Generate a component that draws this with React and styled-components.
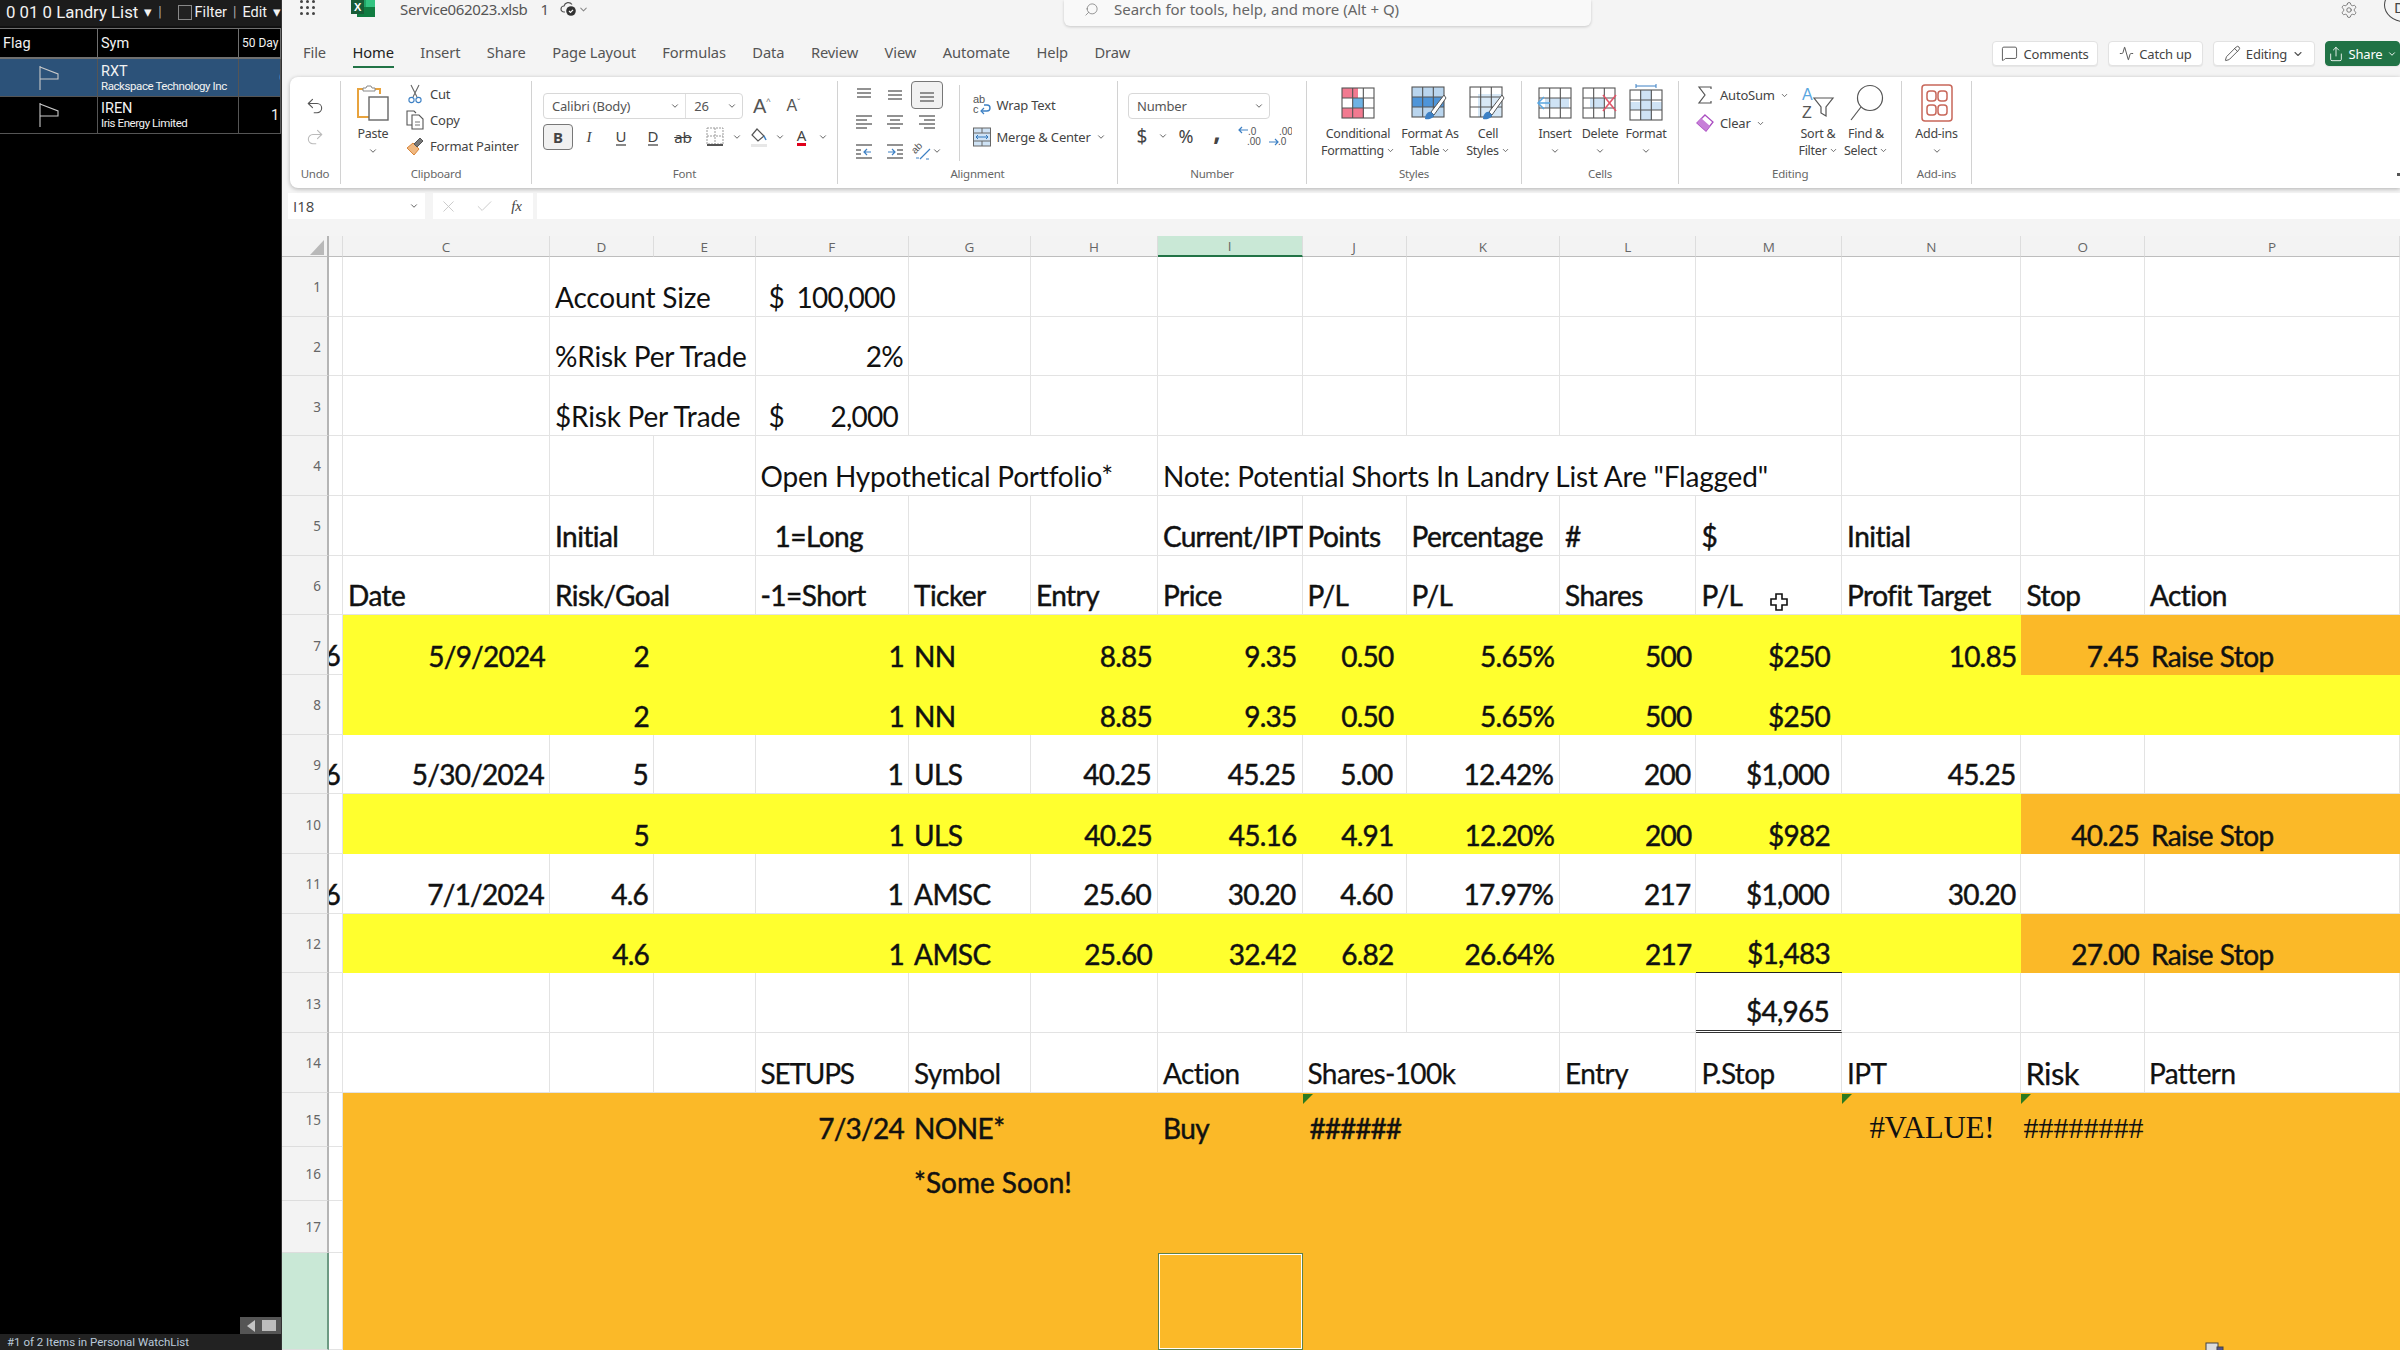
import React from 'react';
import styled, { createGlobalStyle } from 'styled-components';
import {
	Undo2,
	Redo2,
	ChevronDown,
	X,
	Check,
	Search,
	Settings,
	MessageSquare,
	Activity,
	Pencil,
	Share,
} from 'lucide-react';

const GlobalStyle = createGlobalStyle`
	html, body {
		margin: 0;
		padding: 0;
		background: #000;
		overflow: hidden;
	}
	* {
		box-sizing: border-box;
	}
`;

const UI_FONT = `"Noto Sans", "Open Sans", sans-serif`;
const PLAIN_FONT = `"Open Sans", "Noto Sans", sans-serif`;

const Page = styled.div`
	position: relative;
	display: flex;
	width: 2400px;
	height: 1350px;
	overflow: hidden;
	font-family: ${UI_FONT};
`;

/* ---------- watchlist panel ---------- */

const Sidebar = styled.aside`
	width: 282px;
	flex: none;
	display: flex;
	flex-direction: column;
	background: #000;
	color: #f2f2f2;
	font-family: Roboto, sans-serif;
	border-right: 1px solid #333;
`;

const ListBar = styled.div`
	height: 28px;
	flex: none;
	display: flex;
	align-items: center;
	gap: 6px;
	padding: 0 0 2px 6px;
	background: #1c1c1c;
	border-bottom: 2px solid #111;
	font-size: 16.8px;
	white-space: nowrap;
	overflow: hidden;
`;

const FilterBox = styled.span`
	width: 15px;
	height: 15px;
	margin-left: 10px;
	margin-right: -3px;
	border: 1px solid #888;
	background: #222;
`;

const SmallCaps = styled.span`
	font-size: 14.5px;
`;

const Pipe = styled.span`
	color: #aaa;
	font-size: 14px;
`;

const WatchGrid = styled.div`
	display: grid;
	grid-template-columns: 98px 141px 1fr;
	grid-template-rows: 30px 38px 37px;
	border-top: 1px solid #707070;
`;

const HeadCell = styled.div`
	display: flex;
	align-items: center;
	padding-left: ${(p) => p.$pad || 3}px;
	font-size: ${(p) => p.$size || 14.5}px;
	border-right: 1px solid #707070;
	border-bottom: 2px solid #707070;
	overflow: hidden;
	white-space: nowrap;
`;

const WatchCell = styled.div`
	display: flex;
	flex-direction: ${(p) => (p.$stack ? 'column' : 'row')};
	justify-content: ${(p) => (p.$stack ? 'center' : 'flex-start')};
	align-items: ${(p) => (p.$stack ? 'flex-start' : 'center')};
	padding-left: ${(p) => p.$pad || 3}px;
	background: ${(p) => (p.$active ? '#2c5279' : '#000')};
	border-right: 1px solid #555;
	border-bottom: 1px solid #555;
	overflow: hidden;
	white-space: nowrap;
`;

const Ticker = styled.span`
	font-size: 14.5px;
	line-height: 17px;
`;

const Company = styled.span`
	font-size: 11.5px;
	line-height: 13px;
	letter-spacing: -0.42px;
`;

const WatchValue = styled.span`
	font-size: 14.5px;
`;

const SidebarGap = styled.div`
	flex: 1;
	display: flex;
	justify-content: flex-end;
	align-items: flex-end;
`;

const ScrollBit = styled.div`
	width: 41px;
	height: 17px;
	display: flex;
	align-items: center;
	gap: 7px;
	padding-left: 7px;
	background: #555;
`;

const ScrollArrow = styled.span`
	width: 0;
	height: 0;
	border-top: 6px solid transparent;
	border-bottom: 6px solid transparent;
	border-right: 8px solid #c4c4c4;
`;

const ScrollThumb = styled.span`
	width: 14px;
	height: 11px;
	background: #bdbdbd;
`;

const StatusBar = styled.div`
	height: 16px;
	flex: none;
	display: flex;
	align-items: center;
	padding-left: 7px;
	background: #222;
	color: #b9c9da;
	font-size: 11.5px;
`;

/* ---------- excel top ---------- */

const Workbook = styled.main`
	flex: 1;
	min-width: 0;
	display: flex;
	flex-direction: column;
	background: #f4f4f4;
	color: #444;
`;

const TitleBar = styled.header`
	height: 36px;
	flex: none;
	display: flex;
	align-items: flex-start;
`;

const TitleLeft = styled.div`
	width: 782px;
	height: 18px;
	flex: none;
	display: flex;
	align-items: center;
	padding-left: 18px;
	font-size: 15px;
	color: #555;
`;

const Waffle = styled.div`
	width: 16px;
	display: grid;
	grid-template-columns: repeat(3, 3px);
	gap: 3px;
	margin-top: -3px;
	margin-right: 35px;
`;

const WaffleDot = styled.span`
	width: 3px;
	height: 3px;
	border-radius: 50%;
	background: #444;
`;

const FileName = styled.span`
	margin-left: 25px;
	letter-spacing: -0.35px;
`;

const FileNumber = styled.span`
	margin: 0 11px 0 13px;
`;

const SearchBox = styled.div`
	width: 527px;
	height: 26px;
	flex: none;
	display: flex;
	align-items: center;
	gap: 15px;
	padding: 0 0 8px 20px;
	background: #f9f9f9;
	border-radius: 0 0 6px 6px;
	box-shadow: 0 1px 3px rgba(0, 0, 0, 0.18);
	font-size: 15px;
	color: #666;
`;

const TitleRight = styled.div`
	flex: 1;
	height: 20px;
	display: flex;
	align-items: center;
	justify-content: flex-end;
	gap: 26px;
`;

const Avatar = styled.span`
	width: 40px;
	height: 34px;
	flex: none;
	margin-right: -24px;
	margin-top: -10px;
	border: 1px solid #444;
	border-radius: 50%;
	padding: 8px 0 0 9px;
	font-size: 15px;
`;

const TabBar = styled.nav`
	height: 41px;
	flex: none;
	display: flex;
	align-items: flex-start;
	padding-left: 21px;
`;

const Tab = styled.span`
	margin-right: 26.5px;
	padding-top: 5px;
	height: 32px;
	line-height: 22px;
	font-size: 14.7px;
	letter-spacing: -0.12px;
	color: ${(p) => (p.$active ? '#222' : '#555')};
	border-bottom: ${(p) => (p.$active ? '2px solid #217346' : '2px solid transparent')};
`;

const TopButtons = styled.div`
	margin-left: auto;
	display: flex;
	gap: 10px;
	padding-top: 5px;
`;

const TopButton = styled.span`
	height: 25px;
	width: ${(p) => p.$width}px;
	display: flex;
	align-items: center;
	justify-content: center;
	gap: 5px;
	font-size: 13px;
	letter-spacing: -0.2px;
	border-radius: 4px;
	color: ${(p) => (p.$primary ? '#fff' : '#444')};
	background: ${(p) => (p.$primary ? '#217346' : '#fff')};
	border: 1px solid ${(p) => (p.$primary ? '#217346' : '#e2e2e2')};
	box-shadow: 0 1px 1px rgba(0, 0, 0, 0.06);
`;

/* ---------- ribbon ---------- */

const Ribbon = styled.section`
	height: 111px;
	flex: none;
	display: flex;
	margin-left: 8px;
	background: #fff;
	border-radius: 8px 0 0 8px;
	box-shadow: 0 1px 4px rgba(0, 0, 0, 0.28);
	padding: 4px 0;
	position: relative;
`;

const Group = styled.div`
	width: ${(p) => p.$width}px;
	flex: none;
	display: flex;
	flex-direction: column;
	border-right: 1px solid #d2d2d2;
`;

const GroupBody = styled.div`
	flex: 1;
	display: flex;
	align-items: flex-start;
	padding-left: ${(p) => p.$left || 0}px;
	padding-top: ${(p) => p.$top || 0}px;
	min-height: 0;
`;

const GroupLabel = styled.div`
	height: 19px;
	flex: none;
	text-align: ${(p) => p.$align || 'center'};
	padding-left: ${(p) => p.$left || 0}px;
	font-size: 11.5px;
	letter-spacing: -0.2px;
	line-height: 18px;
	color: #666;
`;

const Col = styled.div`
	display: flex;
	flex-direction: column;
	align-items: ${(p) => p.$align || 'flex-start'};
	width: ${(p) => (p.$width ? `${p.$width}px` : 'auto')};
	margin-top: ${(p) => p.$top || 0}px;
	gap: ${(p) => p.$gap || 0}px;
`;

const Row = styled.div`
	display: flex;
	align-items: center;
	gap: ${(p) => p.$gap || 0}px;
	margin-top: ${(p) => p.$top || 0}px;
`;

const UndoIcon = styled.span`
	height: 31px;
	width: 100%;
	display: flex;
	align-items: center;
	justify-content: center;
	color: ${(p) => (p.$off ? '#bbb' : '#555')};
`;

const SmallTool = styled.div`
	height: ${(p) => p.$height || 26}px;
	display: flex;
	align-items: center;
	gap: 5px;
	font-size: 13px;
	letter-spacing: -0.2px;
	color: #444;
	white-space: nowrap;
`;

const IconSlot = styled.span`
	width: ${(p) => p.$size || 20}px;
	display: flex;
	justify-content: center;
	flex: none;
`;

const BigTool = styled.div`
	width: ${(p) => p.$width}px;
	flex: none;
	display: flex;
	flex-direction: column;
	align-items: center;
	font-size: 12.5px;
	letter-spacing: -0.25px;
	line-height: 17px;
	color: #444;
	white-space: nowrap;
`;

const BigIcon = styled.div`
	height: 44px;
	display: flex;
	align-items: center;
	justify-content: center;
`;

const BigText = styled.div`
	display: flex;
	align-items: center;
	justify-content: center;
	gap: 2px;
	height: 17px;
`;

const SelectBox = styled.div`
	display: flex;
	align-items: center;
	width: ${(p) => p.$width}px;
	height: 26px;
	background: #fff;
	border: 1px solid #d8d8d8;
	border-radius: 4px;
	font-size: 13px;
	letter-spacing: -0.2px;
	color: #555;
`;

const SelectPart = styled.div`
	display: flex;
	align-items: center;
	justify-content: space-between;
	width: ${(p) => p.$width}px;
	height: 100%;
	padding: 0 5px 0 8px;
	border-right: ${(p) => (p.$split ? '1px solid #e0e0e0' : 'none')};
`;

const FontSizeGlyph = styled.span`
	font-size: ${(p) => p.$size}px;
	line-height: 1;
	color: #555;
	margin-left: ${(p) => p.$left || 0}px;
	font-family: "Liberation Sans", sans-serif;
`;

const TinyMark = styled.span`
	font-size: 9px;
	vertical-align: super;
	color: #777;
`;

const FormatButton = styled.span`
	width: ${(p) => p.$width || 32}px;
	height: 26px;
	display: flex;
	align-items: center;
	justify-content: center;
	font-size: 15px;
	color: #444;
	font-weight: ${(p) => (p.$bold ? 700 : 400)};
	font-style: ${(p) => (p.$italic ? 'italic' : 'normal')};
	font-family: ${(p) => (p.$italic ? '"Liberation Serif", serif' : UI_FONT)};
	background: ${(p) => (p.$on ? '#f1f1f1' : 'transparent')};
	border: ${(p) => (p.$on ? '1px solid #777' : 'none')};
	border-radius: 4px;
`;

const UnderlineGlyph = styled.span`
	line-height: 15px;
	border-bottom: ${(p) => (p.$heavy ? '3px' : '2px')} solid ${(p) => p.$color || '#888'};
`;

const StrikeGlyph = styled.span`
	text-decoration: line-through;
`;

const AlignGrid = styled.div`
	display: grid;
	grid-template-columns: repeat(3, 31.5px);
	grid-auto-rows: 28px;
`;

const AlignCell = styled.span`
	display: flex;
	align-items: center;
	justify-content: center;
	background: ${(p) => (p.$on ? '#f1f1f1' : 'transparent')};
	border: ${(p) => (p.$on ? '1px solid #777' : 'none')};
	border-radius: 4px;
`;

const InnerRule = styled.div`
	width: 1px;
	height: 76px;
	background: #d2d2d2;
	margin: 4px 12px 0 16px;
`;

const NumberGlyph = styled.span`
	font-size: ${(p) => p.$size || 18}px;
	font-weight: ${(p) => p.$weight || 400};
	color: #444;
	line-height: 1;
	margin-top: ${(p) => (p.$lift ? `-${p.$lift}px` : 0)};
`;

const RibbonEnd = styled.span`
	position: absolute;
	right: 0;
	bottom: 12px;
	width: 3px;
	height: 3px;
	background: #555;
`;

/* ---------- formula bar ---------- */

const FormulaBar = styled.div`
	height: 26px;
	flex: none;
	display: flex;
	gap: 8px;
	margin: 5px 0 17px 6px;
`;

const NameBox = styled.div`
	width: 137px;
	display: flex;
	align-items: center;
	justify-content: space-between;
	padding: 0 6px 0 5px;
	background: #fff;
	font-family: ${PLAIN_FONT};
	font-size: 15px;
	color: #444;
`;

const FxBox = styled.div`
	width: 100px;
	display: flex;
	align-items: center;
	justify-content: space-between;
	padding: 0 11px 0 6px;
	background: #fff;
	margin-right: -4px;
	color: #c4c4c4;
`;

const FxText = styled.span`
	font-family: "Liberation Serif", serif;
	font-style: italic;
	font-size: 15px;
	color: #444;
`;

const FormulaInput = styled.div`
	flex: 1;
	background: #fff;
`;

/* ---------- sheet ---------- */

const Sheet = styled.div`
	flex: 1;
	min-height: 0;
	display: grid;
	grid-template-columns: 47px 14px 207px 104px 101.5px 153.5px 122px 127px 144.5px 104px 153.6px 136.4px 145.6px 179.4px 123.5px 1fr;
	grid-template-rows: 21px repeat(14, 59.71px) 54px 54px 52px 1fr;
	background: #fff;
	font-family: Lato, sans-serif;
	color: #111;
`;

const Corner = styled.div`
	display: flex;
	align-items: flex-end;
	justify-content: flex-end;
	padding: 0 3px 1px 0;
	background: #f3f3f3;
	border-right: 2px solid #b5b5b5;
	border-bottom: 1px solid #bdbdbd;
`;

const ColHead = styled.div`
	display: flex;
	align-items: center;
	justify-content: center;
	padding-top: 1px;
	font-family: ${PLAIN_FONT};
	font-size: 13.5px;
	color: #666;
	background: ${(p) => (p.$on ? '#c9e8d6' : '#f3f3f3')};
	border-right: 1px solid #ddd;
	border-bottom: ${(p) => (p.$on ? '2px solid #217346' : '1px solid #bdbdbd')};
`;

const RowHead = styled.div`
	display: flex;
	align-items: center;
	justify-content: flex-end;
	padding: 2px 6px 0 0;
	font-family: ${UI_FONT};
	font-size: 13.5px;
	color: #666;
	background: ${(p) => (p.$on ? '#c9e8d6' : '#f3f3f3')};
	border-right: 2px solid ${(p) => (p.$on ? '#6d9a83' : '#b5b5b5')};
	border-bottom: 1px solid #ddd;
`;

const fills = {
	yellow: '#ffff2e',
	orange: '#fbb928',
};

const Cell = styled.div`
	position: relative;
	grid-column: span ${(p) => p.$span || 1};
	display: flex;
	align-items: flex-end;
	justify-content: ${(p) => (p.$align === 'right' ? 'flex-end' : p.$align === 'center' ? 'center' : 'flex-start')};
	padding: 0 ${(p) => p.$padRight ?? 5}px 2px ${(p) => p.$padLeft ?? 5}px;
	font-size: ${(p) => p.$size || 28}px;
	line-height: 34px;
	letter-spacing: ${(p) => p.$tight ?? -0.75}px;
	white-space: nowrap;
	font-family: ${(p) => (p.$serif ? '"Liberation Serif", serif' : 'inherit')};
	-webkit-text-stroke: ${(p) => p.$stroke || 0}px;
	background: ${(p) => (p.$fill ? fills[p.$fill] : '#fff')};
	border-right: ${(p) => (p.$fill ? 'none' : '1px solid #e3e3e3')};
	border-bottom: ${(p) => {
		if (p.$under === 'double') return '3px double #333';
		if (p.$under === 'single') return '1px solid #222';
		return p.$fill ? 'none' : '1px solid #e3e3e3';
	}};
	box-shadow: ${(p) => (p.$selected ? 'inset 0 0 0 1px #5d8049, inset 0 0 0 2px #fff' : 'none')};

	&::before {
		content: '';
		display: ${(p) => (p.$flag ? 'block' : 'none')};
		position: absolute;
		top: 1px;
		left: 0;
		border-top: 10px solid #2c7a1f;
		border-right: 10px solid transparent;
	}
`;

const NarrowCell = styled(Cell)`
	overflow: hidden;
	justify-content: flex-end;
	padding-right: 2px;
	padding-left: 0;
`;

const AccountValue = styled.span`
	flex: 1;
	display: flex;
	justify-content: space-between;
`;

const Cursor = styled.svg`
	position: absolute;
	left: 1769px;
	top: 592px;
`;

const DragIcon = styled.svg`
	position: absolute;
	left: 2205px;
	top: 1342px;
`;

/* ---------- icons ---------- */

const Caret = ({ size = 10, color = '#555' }) => (
	<ChevronDown size={size} strokeWidth={2.2} color={color} />
);

const Flag = () => (
	<svg width="22" height="26" viewBox="0 0 22 26" fill="none" stroke="#c9c9c9" strokeWidth="1.1">
		<path d="M2 1v24" />
		<path d="M2 2l18 7v5H2" />
	</svg>
);

const ExcelIcon = () => (
	<svg width="24" height="18" viewBox="0 0 24 18">
		<rect x="6" y="-3" width="18" height="20" rx="1" fill="#21a366" />
		<rect x="15" y="-3" width="9" height="10" fill="#33c481" />
		<rect x="6" y="7" width="18" height="10" fill="#107c41" />
		<rect x="0" y="-2" width="13" height="16" fill="#185c37" />
		<text x="3" y="11" fontSize="11" fontWeight="700" fill="#fff" fontFamily="Liberation Sans">X</text>
	</svg>
);

const CloudSync = () => (
	<svg width="18" height="16" viewBox="0 0 18 16" fill="none" stroke="#555" strokeWidth="1.2">
		<path d="M5 11H4a3 3 0 0 1 0-6 4.5 4.5 0 0 1 8-1.5" />
		<circle cx="11" cy="10" r="4.8" fill="#333" stroke="none" />
		<path d="M9 10l1.5 1.5L13 8.8" stroke="#fff" />
	</svg>
);

const PasteIcon = () => (
	<svg width="32" height="36" viewBox="0 0 32 36" fill="none">
		<path d="M6 4H1v28h11" stroke="#e8a33d" strokeWidth="2" />
		<path d="M18 4h5v5" stroke="#e8a33d" strokeWidth="2" />
		<path d="M6 6V3h3l1-2h4l1 2h3v3z" fill="#fff" stroke="#888" />
		<rect x="12" y="12" width="19" height="23" fill="#fff" stroke="#666" strokeWidth="1.4" />
	</svg>
);

const CutIcon = () => (
	<svg width="14" height="20" viewBox="0 0 14 20" fill="none" stroke="#666" strokeWidth="1.1">
		<path d="M3 1l6 12M11 1L5 13" />
		<circle cx="3.5" cy="16" r="2.6" stroke="#3d80c4" />
		<circle cx="10.5" cy="16" r="2.6" stroke="#3d80c4" />
	</svg>
);

const CopyIcon = () => (
	<svg width="18" height="20" viewBox="0 0 18 20" fill="none" stroke="#555" strokeWidth="1.1">
		<path d="M8 15H1V1h7l2 2" />
		<path d="M6 5h7l4 4v10H6z" fill="#fff" />
		<path d="M9 12h5M9 15h5" stroke="#777" />
	</svg>
);

const PainterIcon = () => (
	<svg width="18" height="20" viewBox="0 0 18 20" fill="none">
		<path d="M1 12l6-5 6 6-5 6z" fill="#f0b880" stroke="#d8853a" />
		<path d="M8 8l6-6 3 3-6 6z" fill="#777" stroke="#555" />
	</svg>
);

const Lines = ({ rows, children, color = '#777' }) => (
	<svg width="20" height="18" viewBox="0 0 20 18" fill="none" stroke={color} strokeWidth="1.6">
		{rows.map(([x1, x2, y]) => (
			<path key={`${x1}-${y}`} d={`M${x1} ${y}H${x2}`} />
		))}
		{children}
	</svg>
);

const BorderIcon = () => (
	<svg width="20" height="20" viewBox="0 0 20 20" fill="none" stroke="#999" strokeWidth="1" strokeDasharray="2 1">
		<rect x="2" y="1" width="16" height="16" />
		<path d="M10 1v16M2 9h16" />
		<path d="M2 18h16" stroke="#555" strokeWidth="2" strokeDasharray="none" />
	</svg>
);

const FillIcon = () => (
	<svg width="20" height="21" viewBox="0 0 20 21" fill="none">
		<path d="M8 2l7 7-6 5-6-6z" stroke="#555" strokeWidth="1.2" />
		<path d="M15 9l2 4" stroke="#3d80c4" strokeWidth="1.6" />
		<rect x="2" y="17" width="16" height="3" fill="#e7e7e7" />
	</svg>
);

const WrapIcon = () => (
	<svg width="20" height="22" viewBox="0 0 20 22" fill="none">
		<text x="1" y="9" fontSize="11" fill="#555" fontFamily="Liberation Sans">ab</text>
		<text x="1" y="19" fontSize="11" fill="#555" fontFamily="Liberation Sans">c</text>
		<path d="M9 17h6a3 3 0 0 0 0-6h-3" stroke="#3d80c4" strokeWidth="1.4" />
		<path d="M12 14l-3 3 3 3" stroke="#3d80c4" strokeWidth="1.2" />
	</svg>
);

const MergeIcon = () => (
	<svg width="20" height="22" viewBox="0 0 20 22" fill="none" stroke="#666">
		<rect x="1.5" y="2" width="17" height="18" fill="#cfe3f5" stroke="#666" />
		<path d="M1.5 7h17M1.5 15h17M10 2v5M10 15v5" />
		<path d="M4 11h12M6 9l-2 2 2 2M14 9l2 2-2 2" stroke="#2f77bc" />
	</svg>
);

const DecimalIcon = ({ up }) => (
	<svg width="24" height="22" viewBox="0 0 24 22" fill="none">
		<path d={up ? 'M11 5H2M5 2L2 5l3 3' : 'M1 17h9M7 14l3 3-3 3'} stroke="#3d80c4" strokeWidth="1.2" />
		<text x="11" y="10" fontSize="10" fill="#555" fontFamily="Liberation Sans">{up ? '.0' : '.00'}</text>
		<text x="10" y="20" fontSize="10" fill="#555" fontFamily="Liberation Sans">{up ? '.00' : '.0'}</text>
	</svg>
);

const GridLines = ({ x = 1, y = 2, w = 32, h = 30 }) => (
	<g fill="none" stroke="#555" strokeWidth="1.1">
		<rect x={x} y={y} width={w} height={h} />
		<path d={`M${x} ${y + h / 3}h${w}M${x} ${y + (2 * h) / 3}h${w}M${x + w / 3} ${y}v${h}M${x + (2 * w) / 3} ${y}v${h}`} />
	</g>
);

const Brush = () => (
	<g>
		<path d="M33 10L20 27l3 3 12-17z" fill="#fff" stroke="#555" strokeWidth="1" />
		<path d="M14 34c0-4 3-8 6-7l3 3c0 3-5 5-9 4z" fill="#3d80c4" />
	</g>
);

const ConditionalIcon = () => (
	<svg width="34" height="34" viewBox="0 0 34 34">
		<rect x="1" y="2" width="16" height="10" fill="#f27a90" />
		<rect x="1" y="22" width="22" height="10" fill="#f27a90" />
		<rect x="12" y="12" width="11" height="10" fill="#6fb3e4" />
		<GridLines />
	</svg>
);

const TableIcon = () => (
	<svg width="38" height="36" viewBox="0 0 38 36">
		<rect x="1" y="2" width="32" height="10" fill="#b9d5ee" />
		<rect x="1" y="12" width="32" height="10" fill="#4e95d9" />
		<rect x="1" y="22" width="32" height="10" fill="#b9d5ee" />
		<GridLines />
		<Brush />
	</svg>
);

const StylesIcon = () => (
	<svg width="38" height="36" viewBox="0 0 38 36">
		<rect x="9" y="9" width="24" height="23" fill="#d7e8f6" />
		<GridLines />
		<Brush />
	</svg>
);

const InsertIcon = () => (
	<svg width="38" height="34" viewBox="0 0 38 34">
		<rect x="9" y="12" width="24" height="10" fill="#cfe3f5" />
		<GridLines x={3} />
		<path d="M14 17H2M8 11l-6 6 6 6" fill="none" stroke="#5aa6e0" strokeWidth="1.5" />
	</svg>
);

const DeleteIcon = () => (
	<svg width="36" height="34" viewBox="0 0 36 34">
		<rect x="8" y="12" width="14" height="10" fill="#cfe3f5" />
		<GridLines />
		<path d="M21 9l13 16M34 9L21 25" fill="none" stroke="#e0566a" strokeWidth="1.6" />
	</svg>
);

const FormatIcon = () => (
	<svg width="34" height="38" viewBox="0 0 34 38">
		<path d="M7 2h20M7 0v4M27 0v4" fill="none" stroke="#3d80c4" />
		<rect x="1" y="18" width="32" height="8" fill="#cfe3f5" />
		<rect x="11" y="6" width="12" height="30" fill="#cfe3f5" />
		<GridLines y={6} />
	</svg>
);

const SumIcon = () => (
	<svg width="16" height="18" viewBox="0 0 16 18" fill="none" stroke="#555" strokeWidth="1.2">
		<path d="M14 3V1H2l6 8-6 8h12v-2" />
	</svg>
);

const EraserIcon = () => (
	<svg width="18" height="18" viewBox="0 0 18 18">
		<path d="M9 1l8 7-7 9-9-8z" fill="#fff" stroke="#a94cc0" strokeWidth="1.3" />
		<path d="M1 9l4-5 9 8-4 5z" fill="#c77fd8" />
	</svg>
);

const SortIcon = () => (
	<svg width="36" height="36" viewBox="0 0 36 36" fill="none">
		<text x="2" y="15" fontSize="16" fill="#5aa6e0" fontFamily="Liberation Sans">A</text>
		<text x="2" y="33" fontSize="16" fill="#555" fontFamily="Liberation Sans">Z</text>
		<path d="M14 13h19l-7 9v9l-5-3v-6z" stroke="#555" strokeWidth="1.2" />
	</svg>
);

const FindIcon = () => (
	<svg width="36" height="38" viewBox="0 0 36 38" fill="none" stroke="#555" strokeWidth="1.2">
		<circle cx="22" cy="14" r="12.5" />
		<path d="M13 23L3 36" />
	</svg>
);

const AddinsIcon = () => (
	<svg width="34" height="38" viewBox="0 0 34 38" fill="none" stroke="#c8675a" strokeWidth="1.5">
		<rect x="2" y="1" width="30" height="36" rx="3" />
		<rect x="7" y="7" width="9" height="10" rx="3" />
		<rect x="18" y="7" width="9" height="10" rx="3" />
		<rect x="7" y="21" width="9" height="10" rx="3" />
		<rect x="18" y="21" width="9" height="10" rx="3" />
	</svg>
);

/* ---------- data ---------- */

const COLUMNS = ['C', 'D', 'E', 'F', 'G', 'H', 'I', 'J', 'K', 'L', 'M', 'N', 'O', 'P'];
const TABS = ['File', 'Home', 'Insert', 'Share', 'Page Layout', 'Formulas', 'Data', 'Review', 'View', 'Automate', 'Help', 'Draw'];

const right = (text, padRight = 5) => ({ text, align: 'right', padRight, stroke: 0.45 });
const label = (text, extra = {}) => ({ text, tight: -0.2, ...extra });
const head = (text, extra = {}) => ({ text, stroke: 0.45, tight: -0.55, ...extra });
const mid = (text, extra = {}) => ({ text, stroke: 0.25, tight: -0.6, ...extra });

const trade = (date, risk, ticker, entry, price, pts, pct, shares, pl) => ({
	C: date ? right(date) : undefined,
	D: right(risk),
	F: right('1'),
	G: head(ticker),
	H: right(entry, 6),
	I: right(price, 6),
	J: right(pts, 13),
	K: right(pct, 6),
	L: right(shares),
	M: right(pl, 12),
});

const SHEET_ROWS = [
	{ n: 1, cells: { D: label('Account Size', { span: 2 }), F: { dollar: '100,000', padRight: 13, padLeft: 13 } } },
	{ n: 2, cells: { D: label('%Risk Per Trade', { span: 2 }), F: { text: '2%', align: 'right' } } },
	{ n: 3, cells: { D: label('$Risk Per Trade', { span: 2 }), F: { dollar: '2,000', padRight: 10, padLeft: 13 } } },
	{
		n: 4,
		cells: {
			F: label('Open Hypothetical Portfolio*', { span: 3 }),
			I: label('Note: Potential Shorts In Landry List Are "Flagged"', { span: 5 }),
		},
	},
	{
		n: 5,
		cells: {
			D: head('Initial'),
			F: head('1=Long', { padLeft: 19 }),
			I: head('Current/IPT', { tight: -0.75 }),
			J: head('Points'),
			K: head('Percentage'),
			L: head('#'),
			M: head('$'),
			N: head('Initial'),
		},
	},
	{
		n: 6,
		cells: {
			C: head('Date'),
			D: head('Risk/Goal', { span: 2 }),
			F: head('-1=Short'),
			G: head('Ticker'),
			H: head('Entry'),
			I: head('Price'),
			J: head('P/L'),
			K: head('P/L'),
			L: head('Shares'),
			M: head('P/L'),
			N: head('Profit Target'),
			O: head('Stop'),
			P: head('Action'),
		},
	},
	{
		n: 7,
		fill: 'yellow',
		tail: 'orange',
		clipped: true,
		cells: {
			...trade('5/9/2024', '2', 'NN', '8.85', '9.35', '0.50', '5.65%', '500', '$250'),
			N: right('10.85'),
			O: right('7.45', 6),
			P: head('Raise Stop', { padLeft: 6 }),
		},
	},
	{ n: 8, fill: 'yellow', cells: trade(null, '2', 'NN', '8.85', '9.35', '0.50', '5.65%', '500', '$250') },
	{
		n: 9,
		clipped: true,
		cells: {
			...trade('5/30/2024', '5', 'ULS', '40.25', '45.25', '5.00', '12.42%', '200', '$1,000'),
			N: right('45.25'),
		},
	},
	{
		n: 10,
		fill: 'yellow',
		tail: 'orange',
		cells: {
			...trade(null, '5', 'ULS', '40.25', '45.16', '4.91', '12.20%', '200', '$982'),
			O: right('40.25', 6),
			P: head('Raise Stop', { padLeft: 6 }),
		},
	},
	{
		n: 11,
		clipped: true,
		cells: {
			...trade('7/1/2024', '4.6', 'AMSC', '25.60', '30.20', '4.60', '17.97%', '217', '$1,000'),
			N: right('30.20'),
		},
	},
	{
		n: 12,
		fill: 'yellow',
		tail: 'orange',
		cells: {
			...trade(null, '4.6', 'AMSC', '25.60', '32.42', '6.82', '26.64%', '217', '$1,483'),
			O: right('27.00', 6),
			P: head('Raise Stop', { padLeft: 6 }),
		},
	},
	{ n: 13, cells: { M: { ...right('$4,965', 12), under: 'double' } } },
	{
		n: 14,
		cells: {
			F: mid('SETUPS', { tight: -1.2 }),
			G: mid('Symbol'),
			I: mid('Action'),
			J: mid('Shares-100k', { span: 2 }),
			L: mid('Entry'),
			M: mid('P.Stop'),
			N: mid('IPT'),
			O: mid('Risk', { size: 31, padLeft: 4 }),
			P: mid('Pattern', { padLeft: 4 }),
		},
	},
	{
		n: 15,
		fill: 'orange',
		cells: {
			F: right('7/3/24'),
			G: head('NONE*'),
			I: head('Buy'),
			J: head('######', { flag: true, padLeft: 7, tight: -1 }),
			N: { text: '#VALUE!', align: 'center', serif: true, flag: true, size: 31, tight: -0.3 },
			O: { text: '########', serif: true, flag: true, padLeft: 2, size: 30, tight: 0 },
		},
	},
	{ n: 16, fill: 'orange', cells: { G: head('*Some Soon!', { span: 2, tight: 0 }) } },
	{ n: 17, fill: 'orange', cells: {} },
	{ n: 18, fill: 'orange', on: true, cells: { I: { selected: true } } },
];

/* ---------- sheet row ---------- */

function SheetRow({ row }) {
	const rendered = [];
	let skip = 0;

	COLUMNS.forEach((col) => {
		if (skip > 0) {
			skip -= 1;
			return;
		}
		const cell = row.cells[col] || {};
		const isTail = col === 'O' || col === 'P';
		const fill = row.tail && isTail ? row.tail : row.fill;
		const under = col === 'M' && row.n === 12 ? 'single' : cell.under;
		skip = (cell.span || 1) - 1;

		rendered.push(
			<Cell
				key={col}
				$span={cell.span}
				$align={cell.align}
				$padRight={cell.padRight}
				$padLeft={cell.padLeft}
				$stroke={cell.stroke}
				$tight={cell.tight}
				$size={cell.size}
				$serif={cell.serif}
				$fill={fill}
				$flag={cell.flag}
				$under={under}
				$selected={cell.selected}
			>
				{cell.dollar ? (
					<AccountValue>
						<span>$</span>
						<span>{cell.dollar}</span>
					</AccountValue>
				) : (
					cell.text
				)}
			</Cell>
		);
	});

	return (
		<>
			<RowHead $on={row.on}>{row.on ? '' : row.n}</RowHead>
			<NarrowCell $stroke={0.45}>{row.clipped ? '6' : ''}</NarrowCell>
			{rendered}
		</>
	);
}

/* ---------- page ---------- */

export default function App() {
	return (
		<Page>
			<GlobalStyle />
			<Sidebar>
				<ListBar>
					<span>0 01 0 Landry List</span>
					<SmallCaps>▾</SmallCaps>
					<Pipe>|</Pipe>
					<FilterBox />
					<SmallCaps>Filter</SmallCaps>
					<Pipe>|</Pipe>
					<SmallCaps>Edit</SmallCaps>
					<SmallCaps>▾</SmallCaps>
				</ListBar>
				<WatchGrid>
					<HeadCell>Flag</HeadCell>
					<HeadCell>Sym</HeadCell>
					<HeadCell $size={12}>50 Day</HeadCell>
					<WatchCell $active $pad={38}>
						<Flag />
					</WatchCell>
					<WatchCell $active $stack>
						<Ticker>RXT</Ticker>
						<Company>Rackspace Technology Inc</Company>
					</WatchCell>
					<WatchCell $active $pad={40}>
						<WatchValue>6</WatchValue>
					</WatchCell>
					<WatchCell $pad={38}>
						<Flag />
					</WatchCell>
					<WatchCell $stack>
						<Ticker>IREN</Ticker>
						<Company>Iris Energy Limited</Company>
					</WatchCell>
					<WatchCell $pad={32}>
						<WatchValue>1</WatchValue>
					</WatchCell>
				</WatchGrid>
				<SidebarGap>
					<ScrollBit>
						<ScrollArrow />
						<ScrollThumb />
					</ScrollBit>
				</SidebarGap>
				<StatusBar>#1 of 2 Items in Personal WatchList</StatusBar>
			</Sidebar>

			<Workbook>
				<TitleBar>
					<TitleLeft>
						<Waffle>
							{Array.from({ length: 9 }, (_, i) => (
								<WaffleDot key={i} />
							))}
						</Waffle>
						<ExcelIcon />
						<FileName>Service062023.xlsb</FileName>
						<FileNumber>1</FileNumber>
						<CloudSync />
						<Caret size={11} color="#888" />
					</TitleLeft>
					<SearchBox>
						<Search size={15} strokeWidth={1.2} color="#777" style={{ transform: 'scaleX(-1)' }} />
						<span>Search for tools, help, and more (Alt + Q)</span>
					</SearchBox>
					<TitleRight>
						<Settings size={18} strokeWidth={1.1} color="#666" />
						<Avatar>D</Avatar>
					</TitleRight>
				</TitleBar>

				<TabBar>
					{TABS.map((tab) => (
						<Tab key={tab} $active={tab === 'Home'}>
							{tab}
						</Tab>
					))}
					<TopButtons>
						<TopButton $width={106}>
							<MessageSquare size={17} strokeWidth={1.2} />
							Comments
						</TopButton>
						<TopButton $width={95}>
							<Activity size={15} strokeWidth={1.4} />
							Catch up
						</TopButton>
						<TopButton $width={102}>
							<Pencil size={17} strokeWidth={1.2} />
							Editing
							<Caret size={12} />
						</TopButton>
						<TopButton $width={75} $primary>
							<Share size={16} strokeWidth={1.3} />
							Share
							<Caret size={10} color="#fff" />
						</TopButton>
					</TopButtons>
				</TabBar>

				<Ribbon>
					<Group $width={51}>
						<GroupBody>
							<Col $width={50} $align="center" $top={9}>
								<UndoIcon>
									<Undo2 size={20} strokeWidth={1.3} />
								</UndoIcon>
								<UndoIcon $off>
									<Redo2 size={20} strokeWidth={1.3} />
								</UndoIcon>
							</Col>
						</GroupBody>
						<GroupLabel>Undo</GroupLabel>
					</Group>

					<Group $width={191}>
						<GroupBody>
							<BigTool $width={64}>
								<BigIcon>
									<PasteIcon />
								</BigIcon>
								<BigText>Paste</BigText>
								<BigText>
									<Caret />
								</BigText>
							</BigTool>
							<Col>
								<SmallTool>
									<IconSlot>
										<CutIcon />
									</IconSlot>
									Cut
								</SmallTool>
								<SmallTool>
									<IconSlot>
										<CopyIcon />
									</IconSlot>
									Copy
								</SmallTool>
								<SmallTool>
									<IconSlot>
										<PainterIcon />
									</IconSlot>
									Format Painter
								</SmallTool>
							</Col>
						</GroupBody>
						<GroupLabel>Clipboard</GroupLabel>
					</Group>

					<Group $width={306}>
						<GroupBody $left={11} $top={12}>
							<Col $gap={5}>
								<Row $gap={10}>
									<SelectBox $width={200}>
										<SelectPart $width={143} $split>
											Calibri (Body)
											<Caret />
										</SelectPart>
										<SelectPart $width={56}>
											26
											<Caret />
										</SelectPart>
									</SelectBox>
									<FontSizeGlyph $size={20}>
										A<TinyMark>^</TinyMark>
									</FontSizeGlyph>
									<FontSizeGlyph $size={16} $left={6}>
										A<TinyMark>ˇ</TinyMark>
									</FontSizeGlyph>
								</Row>
								<Row>
									<FormatButton $on $bold $width={30}>
										B
									</FormatButton>
									<FormatButton $italic>I</FormatButton>
									<FormatButton>
										<UnderlineGlyph>U</UnderlineGlyph>
									</FormatButton>
									<FormatButton>
										<UnderlineGlyph>D</UnderlineGlyph>
									</FormatButton>
									<FormatButton $width={28}>
										<StrikeGlyph>ab</StrikeGlyph>
									</FormatButton>
									<FormatButton $width={35}>
										<BorderIcon />
									</FormatButton>
									<Caret />
									<FormatButton $width={33}>
										<FillIcon />
									</FormatButton>
									<Caret />
									<FormatButton $width={33}>
										<UnderlineGlyph $heavy $color="#e0001b">
											A
										</UnderlineGlyph>
									</FormatButton>
									<Caret />
								</Row>
							</Col>
						</GroupBody>
						<GroupLabel>Font</GroupLabel>
					</Group>

					<Group $width={280}>
						<GroupBody $left={10}>
							<AlignGrid>
								<AlignCell>
									<Lines rows={[[3, 17, 3], [3, 17, 7], [3, 17, 11]]} />
								</AlignCell>
								<AlignCell>
									<Lines rows={[[3, 17, 5], [3, 17, 9], [3, 17, 13]]} />
								</AlignCell>
								<AlignCell $on>
									<Lines rows={[[3, 17, 7], [3, 17, 11], [3, 17, 15]]} />
								</AlignCell>
								<AlignCell>
									<Lines rows={[[2, 18, 2], [2, 13, 6], [2, 18, 10], [2, 13, 14]]} />
								</AlignCell>
								<AlignCell>
									<Lines rows={[[2, 18, 2], [5, 15, 6], [2, 18, 10], [5, 15, 14]]} />
								</AlignCell>
								<AlignCell>
									<Lines rows={[[2, 18, 2], [7, 18, 6], [2, 18, 10], [7, 18, 14]]} />
								</AlignCell>
								<AlignCell>
									<Lines rows={[[2, 18, 3], [2, 7, 8], [2, 7, 12], [2, 18, 16]]}>
										<path d="M17 10H10M13 7l-3 3 3 3" stroke="#3d80c4" strokeWidth="1.2" />
									</Lines>
								</AlignCell>
								<AlignCell>
									<Lines rows={[[2, 18, 3], [12, 18, 8], [12, 18, 12], [2, 18, 16]]}>
										<path d="M3 10h7M7 7l3 3-3 3" stroke="#3d80c4" strokeWidth="1.2" />
									</Lines>
								</AlignCell>
								<AlignCell>
									<Lines rows={[]}>
										<text x="1" y="9" fontSize="10" fill="#555" stroke="none" transform="rotate(-45 6 8)" fontFamily="Liberation Sans">ab</text>
										<path d="M8 17L18 7M4 16h3M14 17h3" stroke="#3d80c4" strokeWidth="1.2" />
									</Lines>
									<Caret />
								</AlignCell>
							</AlignGrid>
							<InnerRule />
							<Col $top={8}>
								<SmallTool $height={32}>
									<IconSlot>
										<WrapIcon />
									</IconSlot>
									Wrap Text
								</SmallTool>
								<SmallTool $height={32}>
									<IconSlot>
										<MergeIcon />
									</IconSlot>
									Merge &amp; Center
									<Caret />
								</SmallTool>
							</Col>
						</GroupBody>
						<GroupLabel>Alignment</GroupLabel>
					</Group>

					<Group $width={189}>
						<GroupBody $left={10} $top={12}>
							<Col $gap={6}>
								<SelectBox $width={142}>
									<SelectPart $width={141}>
										Number
										<Caret />
									</SelectPart>
								</SelectBox>
								<Row $gap={0}>
									<IconSlot $size={28}>
										<NumberGlyph $size={19}>$</NumberGlyph>
									</IconSlot>
									<IconSlot $size={14}>
										<Caret />
									</IconSlot>
									<IconSlot $size={32}>
										<NumberGlyph $size={18}>%</NumberGlyph>
									</IconSlot>
									<IconSlot $size={30}>
										<NumberGlyph $size={26} $weight={700} $lift={10}>,</NumberGlyph>
									</IconSlot>
									<IconSlot $size={34}>
										<DecimalIcon up />
									</IconSlot>
									<IconSlot $size={28}>
										<DecimalIcon />
									</IconSlot>
								</Row>
							</Col>
						</GroupBody>
						<GroupLabel>Number</GroupLabel>
					</Group>

					<Group $width={215}>
						<GroupBody $left={9}>
							<BigTool $width={84}>
								<BigIcon>
									<ConditionalIcon />
								</BigIcon>
								<BigText>Conditional</BigText>
								<BigText>
									Formatting
									<Caret size={9} />
								</BigText>
							</BigTool>
							<BigTool $width={60}>
								<BigIcon>
									<TableIcon />
								</BigIcon>
								<BigText>Format As</BigText>
								<BigText>
									Table
									<Caret size={9} />
								</BigText>
							</BigTool>
							<BigTool $width={56}>
								<BigIcon>
									<StylesIcon />
								</BigIcon>
								<BigText>Cell</BigText>
								<BigText>
									Styles
									<Caret size={9} />
								</BigText>
							</BigTool>
						</GroupBody>
						<GroupLabel>Styles</GroupLabel>
					</Group>

					<Group $width={157}>
						<GroupBody $left={11}>
							<BigTool $width={44}>
								<BigIcon>
									<InsertIcon />
								</BigIcon>
								<BigText>Insert</BigText>
								<BigText>
									<Caret />
								</BigText>
							</BigTool>
							<BigTool $width={46}>
								<BigIcon>
									<DeleteIcon />
								</BigIcon>
								<BigText>Delete</BigText>
								<BigText>
									<Caret />
								</BigText>
							</BigTool>
							<BigTool $width={46}>
								<BigIcon>
									<FormatIcon />
								</BigIcon>
								<BigText>Format</BigText>
								<BigText>
									<Caret />
								</BigText>
							</BigTool>
						</GroupBody>
						<GroupLabel>Cells</GroupLabel>
					</Group>

					<Group $width={223}>
						<GroupBody $left={16}>
							<Col $width={99}>
								<SmallTool $height={28}>
									<IconSlot>
										<SumIcon />
									</IconSlot>
									AutoSum
									<Caret size={9} />
								</SmallTool>
								<SmallTool $height={28}>
									<IconSlot>
										<EraserIcon />
									</IconSlot>
									Clear
									<Caret size={9} />
								</SmallTool>
							</Col>
							<BigTool $width={48}>
								<BigIcon>
									<SortIcon />
								</BigIcon>
								<BigText>Sort &amp;</BigText>
								<BigText>
									Filter
									<Caret size={9} />
								</BigText>
							</BigTool>
							<BigTool $width={48}>
								<BigIcon>
									<FindIcon />
								</BigIcon>
								<BigText>Find &amp;</BigText>
								<BigText>
									Select
									<Caret size={9} />
								</BigText>
							</BigTool>
						</GroupBody>
						<GroupLabel $align="left" $left={93}>Editing</GroupLabel>
					</Group>

					<Group $width={70}>
						<GroupBody>
							<BigTool $width={69}>
								<BigIcon>
									<AddinsIcon />
								</BigIcon>
								<BigText>Add-ins</BigText>
								<BigText>
									<Caret />
								</BigText>
							</BigTool>
						</GroupBody>
						<GroupLabel>Add-ins</GroupLabel>
					</Group>
					<RibbonEnd />
				</Ribbon>

				<FormulaBar>
					<NameBox>
						I18
						<Caret />
					</NameBox>
					<FxBox>
						<X size={19} strokeWidth={1.1} />
						<Check size={19} strokeWidth={1.1} />
						<FxText>fx</FxText>
					</FxBox>
					<FormulaInput />
				</FormulaBar>

				<Sheet>
					<Corner>
						<svg width="14" height="15" viewBox="0 0 14 15">
							<path d="M14 0v15H0z" fill="#b9b9b9" />
						</svg>
					</Corner>
					<ColHead />
					{COLUMNS.map((col) => (
						<ColHead key={col} $on={col === 'I'}>
							{col}
						</ColHead>
					))}
					{SHEET_ROWS.map((row) => (
						<SheetRow key={row.n} row={row} />
					))}
				</Sheet>
			</Workbook>

			<Cursor width="20" height="20" viewBox="0 0 20 20">
				<path d="M7 2h6v5h5v6h-5v5H7v-5H2V7h5z" fill="#fff" stroke="#111" strokeWidth="1.6" />
			</Cursor>
			<DragIcon width="20" height="12" viewBox="0 0 20 12" fill="none" stroke="#444">
				<rect x="1" y="1" width="12" height="11" fill="#ddd" />
				<rect x="12" y="5" width="6" height="7" fill="#558" />
			</DragIcon>
		</Page>
	);
}
